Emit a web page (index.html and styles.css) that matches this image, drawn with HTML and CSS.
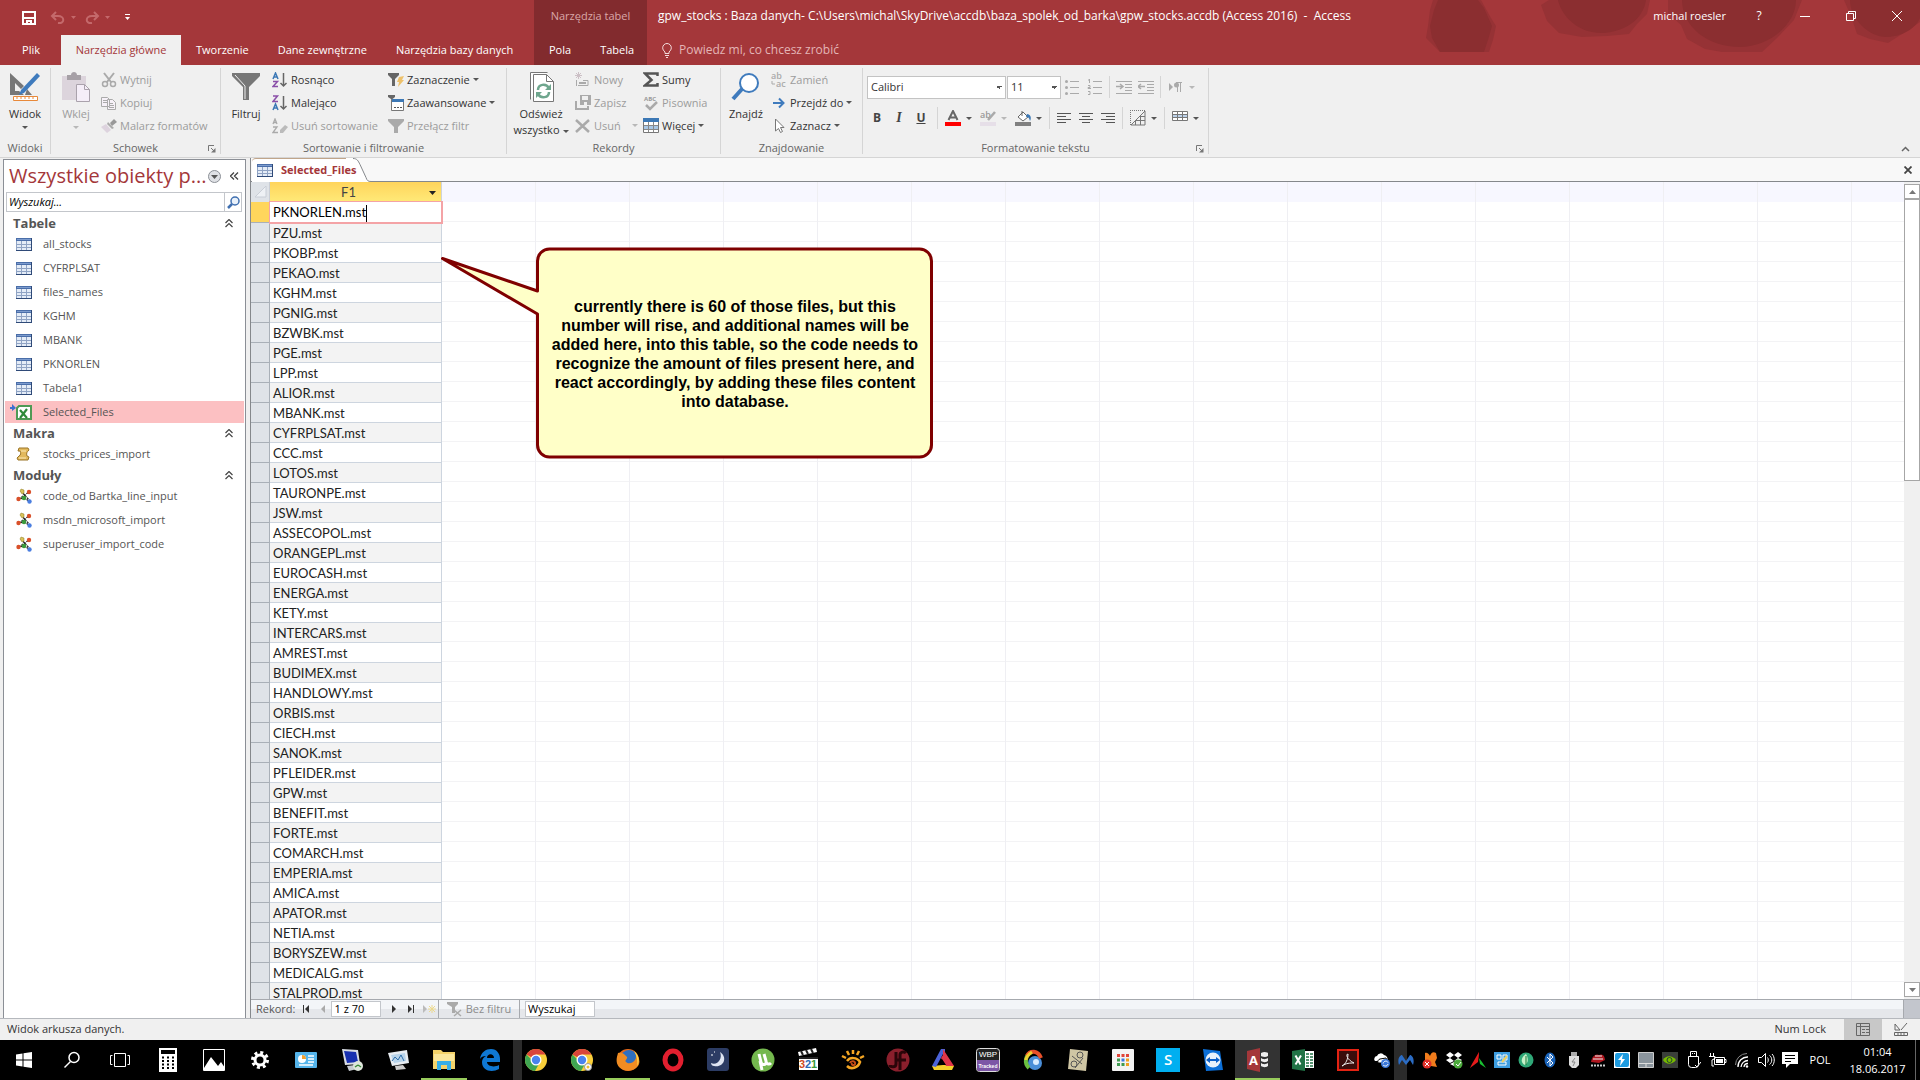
FILE: index.html
```html
<!DOCTYPE html>
<html lang="pl">
<head>
<meta charset="utf-8">
<title>gpw_stocks - Access</title>
<link rel="stylesheet" href="styles.css">
</head>
<body>
<svg class="sprite" aria-hidden="true">
  <symbol id="table" viewBox="0 0 16 13"><path fill="#e4ecf7" d="M0 0h16v13H0z"/><path fill="#4a6ea9" d="M0 0h16v3H0z"/><path fill="#7d9cce" d="M1 1h14v1H1z"/><path d="M.5 3v10M5.500 3v10M10.500 3v10M0 6.500h16M0 9.500h16" stroke="#8fa3c4" fill="none"/><path d="M0 12.500h16M15.500 0v13" stroke="#2f4a78" fill="none"/></symbol>
  <symbol id="module" viewBox="0 0 16 16"><path d="M3 11 13 4M5 3l9 10M2 11l6-1 5 3" stroke="#222" stroke-width="1.300" stroke-dasharray="2 1" fill="none"/><path fill="#d8c25a" stroke="#8f7c22" stroke-width=".5" d="m5 1 3 1v3L6 6 4 3z"/><circle cx="13" cy="4" r="2.200" fill="#d9502a"/><circle cx="2.500" cy="11" r="2.200" fill="#d9502a"/><circle cx="8" cy="10" r="2.300" fill="#3c9a3c"/><circle cx="13.500" cy="13.500" r="2.200" fill="#4a7ee0"/></symbol>
  <symbol id="fold" viewBox="0 0 8 9"><path d="m.5 4 3.500-3.500L7.500 4m-7 4L4 4.500 7.500 8" stroke="#444" stroke-width="1.200" fill="none"/></symbol>
  <symbol id="launch" viewBox="0 0 8 8"><path d="M.5 6V.5H6M3 3l4 4" stroke="#777" fill="none"/><path d="M7.500 3v4.500H3z" fill="#777"/></symbol>
  <symbol id="chrome" viewBox="0 0 24 24"><circle cx="12" cy="12" r="11" fill="#f9cf3a"/><path fill="#d9453a" d="M12 12 2.500 6.500A11 11 0 0 1 21.500 6.500H12z"/><path fill="#3fa652" d="M2.500 6.500A11 11 0 0 0 11 23l5-9-7-1z"/><circle cx="12" cy="12" r="5.500" fill="#fff"/><circle cx="12" cy="12" r="4.200" fill="#4a83ee"/></symbol>
</svg>

<header class="titlebar">
  <svg class="blots" viewBox="0 0 500 52" width="500" height="52" aria-hidden="true">
    <g fill="#963235"><path d="M13 0h48l10 18 5 8-3 14-4 12H20L6 38l2-12 2-16zM129 0h101l-3 14-10 10-8 10-22 2-25 1-23-4-12-12-6-16zM248 0h134l-8 20-17 18-15 14h-40l-17-3-18-10-6-14-13-12zM424 0h76v22l-18 12-14 9-18-4-13-5-5-15z"/></g>
    <g fill="#8b2e30"><path d="M18 0h40l6 8 8 18-4 14-4 12H20l-8-14-2-12 4-16zM138 0h88c-1 9-9 30-42 33-30 1-44-22-46-33zM262 0h114c0 24-26 47-56 47-32 0-58-20-58-47zM430 0h70v18c-4 10-18 19-34 19s-36-17-36-37z"/></g>
  </svg>
  <div class="tb-left">
    <div class="quick">
      <button aria-label="Zapisz"><svg width="14" height="14" viewBox="0 0 14 14"><path fill="none" stroke="#fff" stroke-width="2" d="M1 1h12v12H1z"/><path fill="#fff" d="M1 6h12v2H1zM4 9h6v4H8v-2H6v2H4z"/></svg></button>
      <button class="q-undo" aria-label="Cofnij"><svg width="27" height="14" viewBox="0 0 27 14"><path fill="none" stroke="#c4696b" stroke-width="2" d="M6 1 2 5l4 4M2 5h6c7 0 7 8 0 7"/><path fill="#c4696b" d="M21 5h5l-2.500 3z"/></svg></button>
      <button class="q-redo" aria-label="Wykonaj ponownie"><svg width="27" height="14" viewBox="0 0 27 14"><path fill="none" stroke="#c4696b" stroke-width="2" d="m9 1 4 4-4 4m4-4H7c-7 0-7 8 0 7"/><path fill="#c4696b" d="M20 5h5l-2.500 3z"/></svg></button>
      <button aria-label="Dostosuj pasek"><svg width="7" height="7" viewBox="0 0 7 7"><path fill="#fff" d="M1 0h5v1H1zM1 3h5L3.500 6z"/></svg></button>
    </div>
    <nav class="tabs">
      <button class="tab file">Plik</button><button class="tab on">Narzędzia główne</button><button class="tab">Tworzenie</button><button class="tab">Dane zewnętrzne</button><button class="tab">Narzędzia bazy danych</button>
    </nav>
  </div>
  <div class="tb-context">
    <div class="ctx-name">Narzędzia tabel</div>
    <nav class="tabs"><button class="tab">Pola</button><button class="tab">Tabela</button></nav>
  </div>
  <div class="tb-right">
    <div class="caption">
      <span>gpw_stocks : Baza danych- C:\Users\michal\SkyDrive\accdb\baza_spolek_od_barka\gpw_stocks.accdb (Access 2016) &nbsp;- &nbsp;Access</span>
      <span class="user">michal roesler</span>
      <button class="win" aria-label="Pomoc">?</button>
      <button class="win" aria-label="Minimalizuj"><svg width="10" height="10"><path d="M0 5.500h10" stroke="#fff"/></svg></button>
      <button class="win" aria-label="Przywróć"><svg width="10" height="10"><path d="M.5 2.500h7v7h-7zM2.500 2V.5h7v7H8" stroke="#fff" fill="none"/></svg></button>
      <button class="win" aria-label="Zamknij"><svg width="10" height="10"><path d="m0 0 10 10M10 0 0 10" stroke="#fff"/></svg></button>
    </div>
    <button class="tell"><svg width="10" height="15" viewBox="0 0 10 15"><path d="M3 10.500V9C1.500 7.500.7 6.500.7 4.800a4.300 4.300 0 0 1 8.600 0C9.300 6.500 8.500 7.500 7 9v1.500zM3 12.500h4M4 14.500h2" stroke="#f3dcdc" fill="none"/></svg>Powiedz mi, co chcesz zrobić</button>
  </div>
</header>

<section class="ribbon">
  <div class="group g-views">
    <div class="body">
      <button class="big"><svg width="32" height="30" viewBox="0 0 32 30"><path fill="#777" d="M1 1v22h14l-5-4H6v-8l6 6 3-3zM18 17l5 6h-7z"/><path fill="#3f7bbd" d="m28 1 3 3-16 17-5 2 2-5z"/><path d="M4.500 24.500h24v4h-24zM8 25v2M12 25v2M16 25v2M20 25v2M24 25v2" stroke="#e8893a" fill="#fff"/></svg><span>Widok</span><i class="dd"></i></button>
    </div>
    <div class="name">Widoki</div>
  </div>
  <div class="group g-clip">
    <div class="body">
      <button class="big off"><svg width="32" height="30" viewBox="0 0 32 30"><path fill="#dcd4dc" d="M2 4h24v24H2z"/><path fill="#a6a0a6" d="M7 3h4c0-4 6-4 6 0h4v5H7z"/><path fill="#f5eef8" stroke="#aaa2ac" d="M16.500 12.500h8l5 5v12h-13z"/><path fill="none" stroke="#aaa2ac" d="M24.500 12.500v5h5"/></svg><span>Wklej</span><i class="dd"></i></button>
      <div class="col">
        <button class="sm off"><svg width="16" height="16"><path d="m3 1 7 9M13 1 6 10" stroke="#aaa" stroke-width="2"/><circle cx="4" cy="12" r="2.500" fill="none" stroke="#aaa" stroke-width="1.500"/><circle cx="12" cy="12" r="2.500" fill="none" stroke="#aaa" stroke-width="1.500"/></svg>Wytnij</button>
        <button class="sm off"><svg width="16" height="16"><path d="M.5 2.500h6l2 2v7h-8zM2 5.500h4M2 7.500h4M6.500 4.500h5l3 3v7h-8zM8 8.500h4M8 10.500h5M8 12.500h5" stroke="#aaa" fill="#f6f1f8"/></svg>Kopiuj</button>
        <button class="sm off"><svg width="16" height="16"><path d="m9 5 4-4 3 3-5 4z" fill="#999"/><path d="m7 4 6 6-2 1-5-5z" fill="#aaa"/><path d="m5 6 5 6-4 3-6-6z" fill="#ddd3de"/></svg>Malarz formatów</button>
      </div>
    </div>
    <div class="name">Schowek<svg class="launch" width="8" height="8"><use href="#launch"/></svg></div>
  </div>
  <div class="group g-sort">
    <div class="body">
      <button class="big"><svg width="32" height="30" viewBox="0 0 32 30"><path fill="#777" d="M2 1h28v3L19 15v13h-6V15L2 4z"/><path d="m5 3 10 11v13" stroke="#f0f0f0" fill="none"/></svg><span>Filtruj</span></button>
      <div class="col">
        <button class="sm"><svg width="16" height="16"><g fill="none" stroke-width="1.500"><path d="m1 7 2.500-6L6 7M2 5h3" stroke="#3c78b5"/><path d="M1 9.500h4.500L1 14.500h5" stroke="#8a4fa8"/><path d="M11.500 1v13M8.500 11l3 3 3-3" stroke="#666"/></g></svg>Rosnąco</button>
        <button class="sm"><svg width="16" height="16"><g fill="none" stroke-width="1.500"><path d="M1 1h4.500L1 6.500h5" stroke="#8a4fa8"/><path d="m1 15 2.500-6L6 15M2 13h3" stroke="#3c78b5"/><path d="M11.500 1v13M8.500 11l3 3 3-3" stroke="#666"/></g></svg>Malejąco</button>
        <button class="sm off"><svg width="16" height="16"><g fill="none" stroke="#aaa" stroke-width="1.300"><path d="m1 6 2-5 2 5M2 4.500h3M1 9h4l-4 5.500h5"/></g><path d="m8 12 5-5 3 2-5 6H8z" fill="#bbb"/></svg>Usuń sortowanie</button>
      </div>
      <div class="col">
        <button class="sm"><svg width="16" height="16"><path d="M0 1h11v2L7 7v7H4V7L0 3z" fill="#666"/><path d="m11 5 5-1-2 4h2l-6 7 1-5H9z" fill="#eec16a"/></svg>Zaznaczenie<i class="dd"></i></button>
        <button class="sm"><svg width="16" height="16"><path d="M0 0h7v2L4.500 4v4H3V4L0 2z" fill="#666"/><path d="M3.500 4.500h12v11h-12z" fill="#fff" stroke="#777"/><path d="M4 4h12v3H4z" fill="#3c78b5"/><path d="M6 12.500h8" stroke="#555" stroke-dasharray="2 1"/></svg>Zaawansowane<i class="dd"></i></button>
        <button class="sm off"><svg width="16" height="16"><path d="M0 1h16v2l-6 6v6H6V9L0 3z" fill="#aaa"/></svg>Przełącz filtr</button>
      </div>
    </div>
    <div class="name">Sortowanie i filtrowanie</div>
  </div>
  <div class="group g-rec">
    <div class="body">
      <button class="big"><svg width="32" height="30" viewBox="0 0 32 30"><path fill="#fff" stroke="#777" d="M5.500 27.500v-27h17M8.500 2.500h13l7 7v20h-20z"/><path fill="none" stroke="#777" d="M21.500 2.500v7h7"/><path d="M13 18c0-6 8-7 11-2M24 20c0 6-8 7-11 2" stroke="#6fa68e" stroke-width="2.500" fill="none"/><path fill="#6fa68e" d="M26 12v6h-6zM11 26v-6h6z"/></svg><span>Odśwież</span><span>wszystko<i class="dd"></i></span></button>
      <div class="col">
        <button class="sm off"><svg width="16" height="16"><path d="M3.500 0v7M0 3.500h7M1 1l5 5M6 1 1 6" stroke="#ccc0c6" /><path d="M3 13.500h10v-5H8" stroke="#aaa" fill="none"/><path d="M4 10h7v2H4zM1 8h1v6H1z" fill="#aaa"/></svg>Nowy</button>
        <button class="sm off"><svg width="16" height="16"><path d="M5 0h11v10H5z" fill="#aaa"/><path d="M7 1h6v4H7zM9 7h3v3H9z" fill="#f0f0f0"/><path d="M1 6v8h12v-3" stroke="#aaa" stroke-width="2" fill="none"/></svg>Zapisz</button>
        <button class="sm off"><svg width="16" height="16"><path d="m1 2 13 12M14 2 1 14" stroke="#aaa" stroke-width="2.500"/></svg>Usuń<i class="dd far"></i></button>
      </div>
      <div class="col">
        <button class="sm"><svg width="16" height="16"><path d="M14.500 4V1.500H2L8.500 8 2 13.500h12.500V11" stroke="#555" stroke-width="2.500" fill="none"/></svg>Sumy</button>
        <button class="sm off"><svg width="16" height="16"><text x="1" y="6" font-size="6" fill="#999" font-family="Open Sans" font-weight="700">ABC</text><path d="m3 10 4 4 7-7" stroke="#aaa" stroke-width="2.500" fill="none"/></svg>Pisownia</button>
        <button class="sm"><svg width="16" height="16"><path d="M.5.500h15v14H.5z" fill="#fff" stroke="#777"/><path d="M0 0h16v4H0z" fill="#3c78b5"/><path d="M1 7h14v4H1z" fill="#a9c8e6"/><path d="M5.500 4v10M10.500 4v10M1 7.500h14M1 11.500h14" stroke="#888"/></svg>Więcej<i class="dd"></i></button>
      </div>
    </div>
    <div class="name">Rekordy</div>
  </div>
  <div class="group g-find">
    <div class="body">
      <button class="big"><svg width="32" height="30" viewBox="0 0 32 30"><circle cx="19" cy="11" r="9" fill="#fff" stroke="#3f7bbd" stroke-width="2"/><path d="m12 17-9 10" stroke="#3f7bbd" stroke-width="4"/></svg><span>Znajdź</span></button>
      <div class="col">
        <button class="sm off"><svg width="16" height="16"><g fill="#aaa" font-family="Open Sans" font-size="9" font-weight="600"><text x="0" y="7">ab</text><text x="5" y="15">ac</text></g><path d="M1 9v3h3" stroke="#aaa" fill="none"/></svg>Zamień</button>
        <button class="sm"><svg width="16" height="16"><path d="M2 8h9M8 3.500 12.500 8 8 12.500" stroke="#3f7bbd" stroke-width="2" fill="none"/></svg>Przejdź do<i class="dd"></i></button>
        <button class="sm"><svg width="16" height="16"><path d="M4.500 1v12l3-2.500 2 4 2-1-2-4h3.500z" fill="#fff" stroke="#777"/></svg>Zaznacz<i class="dd"></i></button>
      </div>
    </div>
    <div class="name">Znajdowanie</div>
  </div>
  <div class="group g-text">
    <div class="body fmt">
      <div class="line">
        <select class="pick font" aria-label="Czcionka"><option>Calibri</option></select>
        <select class="pick size" aria-label="Rozmiar"><option>11</option></select>
        <button class="ic" aria-label="Punktory"><svg width="16" height="16"><path d="M5 2.500h9M5 8.500h9M5 14.500h9" stroke="#aaa"/><g fill="#aaa"><circle cx="1.500" cy="2.500" r="1.500"/><circle cx="1.500" cy="8.500" r="1.500"/><circle cx="1.500" cy="14.500" r="1.500"/></g></svg></button>
        <button class="ic" aria-label="Numerowanie"><svg width="16" height="16"><path d="M6 2.500h9M6 8.500h9M6 14.500h9M2.500 0v4M1 1h1M1 6.500h2v2H1v1h3M1 12.500h2v3H1" stroke="#aaa" fill="none"/></svg></button>
        <i class="bar"></i>
        <button class="ic" aria-label="Zwiększ wcięcie"><svg width="16" height="16"><path d="M0 2.500h16M9 5.500h7M9 8.500h7M9 11.500h7M0 14.500h16" stroke="#aaa"/><path d="M0 7.500h6M4 5l3 2.500L4 10" stroke="#aaa" stroke-width="1.500" fill="none"/></svg></button>
        <button class="ic" aria-label="Zmniejsz wcięcie"><svg width="16" height="16"><path d="M0 2.500h16M9 5.500h7M9 8.500h7M9 11.500h7M0 14.500h16" stroke="#aaa"/><path d="M7 7.500H1M3 5 0 7.500 3 10" stroke="#aaa" stroke-width="1.500" fill="none"/></svg></button>
        <i class="bar"></i>
        <button class="ic drop off" aria-label="Kierunek tekstu"><svg width="16" height="16"><path d="m1 4 4 4-4 4z" fill="#aaa"/><path d="M9.500 4v9M12.500 4v9M8 3.500h6" stroke="#aaa"/><circle cx="8.500" cy="6" r="2.500" fill="#aaa"/></svg><i class="dd"></i></button>
      </div>
      <div class="line">
        <button class="ic ltr b">B</button><button class="ic ltr i">I</button><button class="ic ltr u">U</button>
        <i class="bar"></i>
        <button class="ic drop" aria-label="Kolor czcionki"><svg width="16" height="16"><path d="M3.500 10 8 1l4.500 9M5 7.500h6" stroke="#666" stroke-width="2" fill="none"/><path d="M0 12h16v4H0z" fill="#f00"/></svg><i class="dd"></i></button>
        <button class="ic drop off" aria-label="Wyróżnienie"><svg width="16" height="16"><text x="0" y="8" font-size="9" font-family="Open Sans" fill="#999" font-weight="600">ab</text><path d="M15 2 8 10" stroke="#aaa" stroke-width="2.500"/><path d="M0 12h16v4H0z" fill="#e6dfe8"/></svg><i class="dd"></i></button>
        <button class="ic drop" aria-label="Kolor tła"><svg width="16" height="16"><path d="m3 7 5-5 5 5-5 4z" fill="#fff" stroke="#666"/><path d="M7 6V1" stroke="#666"/><path d="M12 4c5 1 4 5 3 7-1-3-1-4-4-4z" fill="#3c78b5"/><path d="M0 12h16v4H0z" fill="#808080"/></svg><i class="dd"></i></button>
        <i class="bar"></i>
        <button class="ic" aria-label="Do lewej"><svg width="16" height="16"><path d="M1 3.500h14M1 6.500h9M1 9.500h14M1 12.500h9" stroke="#555"/></svg></button>
        <button class="ic" aria-label="Do środka"><svg width="16" height="16"><path d="M1 3.500h14M4 6.500h8M1 9.500h14M4 12.500h8" stroke="#555"/></svg></button>
        <button class="ic" aria-label="Do prawej"><svg width="16" height="16"><path d="M1 3.500h14M6 6.500h9M1 9.500h14M6 12.500h9" stroke="#555"/></svg></button>
        <i class="bar"></i>
        <button class="ic drop" aria-label="Linie siatki"><svg width="16" height="16"><path d="M0 .5h16M.5 0v16" stroke="#777" stroke-dasharray="1 1"/><path d="M1 15 15 1v14zM5.500 11v4M10.500 6v9M5 10.500h10M10 6.500h5" stroke="#777" fill="none"/></svg><i class="dd"></i></button>
        <i class="bar"></i>
        <button class="ic drop" aria-label="Kolor wiersza"><svg width="16" height="16"><path d="M.5 1.500h15v9H.5z" fill="#fff" stroke="#777"/><path d="M1 4h14v4H1z" fill="#bcd2ea"/><path d="M5.500 1v10M10.500 1v10M0 4.500h16M0 7.500h16" stroke="#777"/></svg><i class="dd"></i></button>
      </div>
    </div>
    <div class="name">Formatowanie tekstu<svg class="launch" width="8" height="8"><use href="#launch"/></svg></div>
  </div>
  <button class="collapse" aria-label="Zwiń wstążkę"><svg width="9" height="6"><path d="m1 5 3.500-3.500L8 5" stroke="#666" stroke-width="1.500" fill="none"/></svg></button>
</section>

<main class="work">
  <aside class="navpane">
    <div class="nav-head">
      <h1>Wszystkie obiekty p...</h1>
      <button aria-label="Menu"><svg width="13" height="13"><circle cx="6.500" cy="6.500" r="6" fill="#dfe1e5" stroke="#8b8f96"/><path d="M3 5h7L6.500 9z" fill="#555"/></svg></button>
      <button aria-label="Zwiń okienko"><svg width="9" height="8"><path d="M4 .5.500 4 4 7.500M8 .5 4.500 4 8 7.500" stroke="#444" fill="none" stroke-width="1.300"/></svg></button>
    </div>
    <div class="nav-search"><input type="text" placeholder="Wyszukaj..." aria-label="Wyszukaj obiekt"><button aria-label="Szukaj"><svg width="13" height="13"><circle cx="8" cy="5" r="4" fill="#e9f1fa" stroke="#3f6fb0" stroke-width="1.500"/><path d="m5 8-4 4" stroke="#3f6fb0" stroke-width="2.500"/></svg></button></div>
    <h2>Tabele<svg width="8" height="9"><use href="#fold"/></svg></h2>
    <ul>
      <li><svg width="16" height="13"><use href="#table"/></svg>all_stocks</li>
      <li><svg width="16" height="13"><use href="#table"/></svg>CYFRPLSAT</li>
      <li><svg width="16" height="13"><use href="#table"/></svg>files_names</li>
      <li><svg width="16" height="13"><use href="#table"/></svg>KGHM</li>
      <li><svg width="16" height="13"><use href="#table"/></svg>MBANK</li>
      <li><svg width="16" height="13"><use href="#table"/></svg>PKNORLEN</li>
      <li><svg width="16" height="13"><use href="#table"/></svg>Tabela1</li>
      <li class="sel"><svg width="22" height="18" viewBox="0 0 22 18"><path d="M0 4h2V1l4 4-4 3V6H0z" fill="#3f6fd0"/><path d="M9 3h12v13H7V5z" fill="#fff" stroke="#4f9a55" stroke-width="2"/><path d="m10 7 7 8M17 6l-7 9" stroke="#2f8a3a" stroke-width="2.200"/></svg>Selected_Files</li>
    </ul>
    <h2>Makra<svg width="8" height="9"><use href="#fold"/></svg></h2>
    <ul>
      <li><svg width="16" height="14" viewBox="0 0 16 14"><path d="M3 1h9l1 2c-2 2-3 3-2 6l2 1-1 3H2l-1-2 2-2c2-1 2-3 1-5H2z" fill="#e2b95c" stroke="#9a7426"/><path d="M5 4h5M3 11h7" stroke="#fbeab8"/></svg>stocks_prices_import</li>
    </ul>
    <h2>Moduły<svg width="8" height="9"><use href="#fold"/></svg></h2>
    <ul>
      <li><svg width="16" height="16"><use href="#module"/></svg>code_od Bartka_line_input</li>
      <li><svg width="16" height="16"><use href="#module"/></svg>msdn_microsoft_import</li>
      <li><svg width="16" height="16"><use href="#module"/></svg>superuser_import_code</li>
    </ul>
  </aside>

  <section class="doc">
    <div class="doc-tabs">
      <div class="doc-tab"><svg width="16" height="13"><use href="#table"/></svg>Selected_Files</div>
      <svg class="slant" width="18" height="24" viewBox="0 0 18 24"><path d="M0 .5c4 0 5 2 7 6l6 13c1 3 2 4 5 4V24H0z" fill="#fff"/><path d="M0 .5c4 0 5 2 7 6l6 13c1 3 2 4 5 4" fill="none" stroke="#85888c"/></svg>
      <button class="doc-close" aria-label="Zamknij kartę"><svg width="8" height="8"><path d="m.5.500 7 7M7.500.500l-7 7" stroke="#444" stroke-width="1.800"/></svg></button>
    </div>
    <div class="sheet-row">
      <div class="sheet">
        <table>
          <thead><tr><th class="corner"><svg width="12" height="12"><path d="M11 0v11H0z" fill="#eef1f5" stroke="#c9ced6"/></svg></th><th class="f1">F1<svg width="7" height="4"><path d="M0 0h7L3.500 4z" fill="#222"/></svg></th></tr></thead>
          <tbody>
            <tr class="cur"><td></td><td>PKNORLEN.mst<i class="caret"></i></td></tr>
            <tr><td></td><td>PZU.mst</td></tr>
            <tr><td></td><td>PKOBP.mst</td></tr>
            <tr><td></td><td>PEKAO.mst</td></tr>
            <tr><td></td><td>KGHM.mst</td></tr>
            <tr><td></td><td>PGNIG.mst</td></tr>
            <tr><td></td><td>BZWBK.mst</td></tr>
            <tr><td></td><td>PGE.mst</td></tr>
            <tr><td></td><td>LPP.mst</td></tr>
            <tr><td></td><td>ALIOR.mst</td></tr>
            <tr><td></td><td>MBANK.mst</td></tr>
            <tr><td></td><td>CYFRPLSAT.mst</td></tr>
            <tr><td></td><td>CCC.mst</td></tr>
            <tr><td></td><td>LOTOS.mst</td></tr>
            <tr><td></td><td>TAURONPE.mst</td></tr>
            <tr><td></td><td>JSW.mst</td></tr>
            <tr><td></td><td>ASSECOPOL.mst</td></tr>
            <tr><td></td><td>ORANGEPL.mst</td></tr>
            <tr><td></td><td>EUROCASH.mst</td></tr>
            <tr><td></td><td>ENERGA.mst</td></tr>
            <tr><td></td><td>KETY.mst</td></tr>
            <tr><td></td><td>INTERCARS.mst</td></tr>
            <tr><td></td><td>AMREST.mst</td></tr>
            <tr><td></td><td>BUDIMEX.mst</td></tr>
            <tr><td></td><td>HANDLOWY.mst</td></tr>
            <tr><td></td><td>ORBIS.mst</td></tr>
            <tr><td></td><td>CIECH.mst</td></tr>
            <tr><td></td><td>SANOK.mst</td></tr>
            <tr><td></td><td>PFLEIDER.mst</td></tr>
            <tr><td></td><td>GPW.mst</td></tr>
            <tr><td></td><td>BENEFIT.mst</td></tr>
            <tr><td></td><td>FORTE.mst</td></tr>
            <tr><td></td><td>COMARCH.mst</td></tr>
            <tr><td></td><td>EMPERIA.mst</td></tr>
            <tr><td></td><td>AMICA.mst</td></tr>
            <tr><td></td><td>APATOR.mst</td></tr>
            <tr><td></td><td>NETIA.mst</td></tr>
            <tr><td></td><td>BORYSZEW.mst</td></tr>
            <tr><td></td><td>MEDICALG.mst</td></tr>
            <tr><td></td><td>STALPROD.mst</td></tr>
          </tbody>
        </table>
        <div class="callout">
          <svg width="492" height="214" viewBox="0 0 492 214"><path d="M1.500 11.500 96.500 44V14a12 12 0 0 1 12-12h370a12 12 0 0 1 12 12v184a12 12 0 0 1-12 12h-370a12 12 0 0 1-12-12V67z" fill="#ffffc8" stroke="#7f0000" stroke-width="3" stroke-linejoin="round"/></svg>
          <p>currently there is 60 of those files, but this<br>number will rise, and additional names will be<br>added here, into this table, so the code needs to<br>recognize the amount of files present here, and<br>react accordingly, by adding these files content<br>into database.</p>
        </div>
      </div>
      <div class="vscroll">
        <button aria-label="W górę"><svg width="7" height="4"><path d="M0 4h7L3.500 0z" fill="#777"/></svg></button>
        <div class="track"><div class="thumb"></div></div>
        <button aria-label="W dół"><svg width="7" height="4"><path d="M0 0h7L3.500 4z" fill="#777"/></svg></button>
      </div>
    </div>
    <div class="recnav">
      <div class="rec-main">
        <label for="rec">Rekord:</label>
        <button aria-label="Pierwszy"><svg width="7" height="8"><path d="M0 0h1v8H0zM6 0v8L2 4z" fill="#333"/></svg></button>
        <button aria-label="Poprzedni"><svg width="5" height="8"><path d="M4 0v8L0 4z" fill="#aaa"/></svg></button>
        <input id="rec" type="text" value="1 z 70">
        <button aria-label="Następny"><svg width="5" height="8"><path d="M0 0v8l4-4z" fill="#333"/></svg></button>
        <button aria-label="Ostatni"><svg width="7" height="8"><path d="M5 0h1v8H5zM0 0v8l4-4z" fill="#333"/></svg></button>
        <button aria-label="Nowy rekord"><svg width="13" height="8"><path d="M0 0v8l4-4z" fill="#bbb"/><path d="M9 0v8M5 4h8M6 1l6 6M12 1 6 7" stroke="#ecd98e"/></svg></button>
      </div>
      <button class="nofilter"><svg width="15" height="15"><path d="M0 0h11v2L8 5v6H5V5L0 2z" fill="#aaa"/><path d="m7 8 7 6M14 8l-7 6" stroke="#aaa" stroke-width="1.500"/></svg>Bez filtru</button>
      <input class="find" type="text" value="Wyszukaj" aria-label="Wyszukaj w rekordach">
      <span class="corner-box"></span>
    </div>
  </section>
</main>

<footer class="status">
  <span>Widok arkusza danych.</span>
  <span class="num">Num Lock</span>
  <button class="on" aria-label="Widok arkusza danych"><svg width="14" height="13"><path d="M.5.500h13v12H.5zM0 3.500h14M4.500 0v13" stroke="#666" fill="none"/><path d="M6 6.500h7M6 9.500h7" stroke="#666" stroke-dasharray="3 1"/></svg></button>
  <button aria-label="Widok projektu"><svg width="14" height="13"><path d="M1 1v6h5zM13 0 7 7M.5 9.500h13v3H.5zM4 10v2M7 10v2M10 10v2" stroke="#666" fill="none"/></svg></button>
</footer>

<nav class="taskbar">
  <div class="sys">
    <button aria-label="Start"><svg width="16" height="16"><path fill="#fff" d="M0 2.500 6.500 1.500V7.500H0zM7.500 1.300 16 0v7.500H7.500zM0 8.500h6.500v6L0 13.500zM7.500 8.500H16V16l-8.500-1.300z"/></svg></button>
    <button aria-label="Szukaj"><svg width="18" height="18"><circle cx="11" cy="6.500" r="5" fill="none" stroke="#fff" stroke-width="1.500"/><path d="m7.500 10.500-6 6" stroke="#fff" stroke-width="1.500"/></svg></button>
    <button aria-label="Widok zadań"><svg width="20" height="14"><path d="M4.500.500h11v13h-11zM2.500 2.500H.500v9h2M17.500 2.500h2v9h-2" stroke="#fff" fill="none"/></svg></button>
    <button aria-label="Kalkulator"><svg width="18" height="24"><path fill="#fff" d="M0 0h18v24H0z"/><path d="M2 2h14v4H2z"/><path d="M3 9.500h13M3 13h13M3 16.500h13M3 20h13" stroke="#000" stroke-width="2" stroke-dasharray="2 3"/></svg></button>
  </div>
  <div class="apps a46">
    <button aria-label="Zdjęcia"><svg width="22" height="22"><path d="M.5.500h21v21H.5z" stroke="#fff"/><path fill="#fff" d="M1 19 8 8l7 9 3-4 4 6v2H1z"/></svg></button>
    <button aria-label="Ustawienia"><svg width="18" height="18"><circle cx="9" cy="9" r="5" fill="none" stroke="#fff" stroke-width="3"/><circle cx="9" cy="9" r="7.500" fill="none" stroke="#fff" stroke-width="3" stroke-dasharray="3 2.890"/></svg></button>
    <button aria-label="Panel sterowania"><svg width="22" height="16"><rect width="22" height="16" rx="1" fill="#55b4ea"/><circle cx="7" cy="7" r="4" fill="#fff"/><path d="M7 7V3a4 4 0 0 1 4 4z" fill="#f0a030"/><path d="M13 4h6M13 7h6M13 10h6M4 13h14" stroke="#fff" stroke-width="1.500"/></svg></button>
    <button aria-label="Pulpit zdalny"><svg width="24" height="24"><path d="m2 1 16 1 2 14-15 1z" fill="#d8dce4"/><path d="m4 3 12 1 2 10-11 1z" fill="#1830b0"/><path d="m7 18 8-1 2 4-8 2z" fill="#c8ccd2"/><circle cx="18" cy="18" r="5" fill="#dfe6dc"/><path d="m15 19 3-2M18 17l3 2" stroke="#388a38" stroke-width="1.500"/></svg></button>
    <button aria-label="Monitor"><svg width="24" height="22"><path d="m2 4 19-3 2 13-17 3z" fill="#e8edf2"/><path d="m5 6 14-2 1 8-12 2z" fill="#b7d3ea"/><path d="m6 12 3-4 3 3 3-5 3 6" stroke="#2c6ca8" fill="none"/><path d="m9 17 8-1 3 4-10 1z" fill="#ccc"/></svg></button>
    <button class="run" aria-label="Eksplorator"><svg width="22" height="20"><path fill="#f3d269" d="M0 0h8l2 2h12v17H0z"/><path fill="#fae79c" d="M1 4h20v7H1z"/><path fill="#35aee8" d="M4 20v-9h14v9h-4v-5H8v5z"/></svg></button>
    <button aria-label="Edge"><svg width="20" height="22"><path fill="#0f78d4" d="M0 10C1 3 6 0 11 0c6 0 9 5 9 10v3H7c0 4 7 6 12 3v4c-7 4-17 2-17-7 0-3 2-5 4-6-3 0-5 1-6 3zm7-1h7c0-5-7-5-7 0z"/></svg></button>
    <button class="split" aria-label="Chrome"><svg width="24" height="24"><use href="#chrome"/></svg></button>
    <button aria-label="Chrome 2"><svg width="24" height="24"><use href="#chrome"/><circle cx="18" cy="19" r="3.500" fill="#fff" stroke="#999"/><circle cx="18" cy="19" r="1.500" fill="#f0c030"/></svg></button>
  </div>
  <div class="apps a45">
    <button class="run" aria-label="Firefox"><svg width="24" height="24"><circle cx="12" cy="12" r="11" fill="#e66a1c"/><circle cx="13" cy="10" r="8" fill="#2f6fc0"/><path d="M2 5c3-1 6 0 9 4 1 2-3 3-1 5 3 3 8 0 9-2 2-3 1-6-1-8 5 3 7 10 4 14-4 6-14 6-19 1C-1 14 1 9 2 5z" fill="#f08c22"/><path d="M18 3c5 4 6 10 3 15 1-5 0-10-3-15z" fill="#fbd54a"/></svg></button>
    <button aria-label="Opera"><svg width="22" height="24"><ellipse cx="11" cy="12" rx="8" ry="9" fill="none" stroke="#e21f2f" stroke-width="5"/></svg></button>
    <button aria-label="Stellarium"><svg width="22" height="24"><rect width="22" height="23" rx="3" fill="#2c3c64"/><path d="M13 4c8 5 4 16-6 14-2 0-3-2-3-3 6 3 12-4 9-11z" fill="#dfe5f2"/><path d="M4 7h2M7 4h1" stroke="#fff"/></svg></button>
    <button aria-label="uTorrent"><svg width="24" height="24"><circle cx="12" cy="12" r="11.500" fill="#74b84e"/><path d="m8 6 2 8c1 4 6 3 5-1l-2-7M15 13c0 3 3 4 5 2M9 13l2 9" stroke="#fff" stroke-width="3" fill="none"/></svg></button>
    <button aria-label="Klaps"><svg width="22" height="24"><path fill="#fff" d="M2 10h19v12H2zM1 4l18-4 1 4-18 4z"/><path d="m4 3 2 4M9 2l2 4M14 1l2 4M2 10h19" stroke="#222" stroke-width="2"/><g font-family="Liberation Sans" font-weight="700" font-size="11"><text x="2" y="20" fill="#d04a1e">3</text><text x="8" y="20" fill="#2a6ab8">2</text><text x="14" y="20" fill="#3a9a3a">1</text></g></svg></button>
    <button aria-label="XnView"><svg width="24" height="22"><path d="M6 12c3-4 10-4 13 1-2 6-9 8-13 4" fill="none" stroke="#f5a623" stroke-width="2.500"/><path d="M9 14c1-3 6-2 5 1-1 2-4 1-3-1" fill="none" stroke="#c24a14" stroke-width="2"/><path d="m1 7 4 2M6 2l2 4M12 1v4M18 2l-2 4M23 7l-4 2" stroke="#f5a623" stroke-width="2.500"/></svg></button>
    <button aria-label="JF"><svg width="24" height="24"><circle cx="12" cy="12" r="11.500" fill="#8a1f2c"/><path d="M10 4v12c0 4-6 3-6 1M14 22V7c0-3 4-4 6-2M11 12h9" stroke="#2a0509" stroke-width="3" fill="none"/></svg></button>
    <button aria-label="Trójkąt"><svg width="24" height="24"><path d="m1 18 11-1h9l2 1-2 4H3z" fill="#f5d02a"/><path d="M10 1 1 18l4 1 7-13 2 4V1z" fill="#4b63d8"/><path d="m12 1 11 17h-8l-5-8 2-3z" fill="#e0364a"/><path d="m11 11 4 6H8z" fill="#000"/></svg></button>
    <button aria-label="WBP"><svg width="24" height="24"><rect x=".5" y=".5" width="23" height="23" rx="3" fill="#222" stroke="#ddd"/><path d="M1 12h22v9a2 2 0 0 1-2 2H3a2 2 0 0 1-2-2z" fill="#7c56a6"/><g fill="#fff" text-anchor="middle" font-family="Liberation Sans"><text x="12" y="9" font-size="8">WBP</text><text x="12" y="20" font-size="5" font-weight="700">Tracked</text></g></svg></button>
    <button aria-label="IDM"><svg width="20" height="24"><circle cx="12" cy="15" r="7" fill="#4a8ed8"/><path d="M6 20C1 15 2 7 9 4" stroke="#6cc040" stroke-width="4" fill="none"/><path d="M4 8C7 2 15 2 18 10" stroke="#e8502a" stroke-width="4" fill="none"/><path d="M3 12c0-4 3-6 6-8" stroke="#f0d030" stroke-width="3" fill="none"/><circle cx="13" cy="14" r="3" fill="#d9ecff"/></svg></button>
    <button aria-label="Notatnik"><svg width="22" height="24"><path d="m3 1 18 2-2 20-18-2z" fill="#cfc6a4"/><circle cx="13" cy="7" r="3" fill="none" stroke="#555"/><circle cx="7" cy="16" r="3" fill="none" stroke="#555"/><path d="m5 8 10 8M16 10 8 20" stroke="#555"/></svg></button>
    <button aria-label="Siatka"><svg width="22" height="22"><rect width="22" height="22" rx="1" fill="#f3f3f3"/><path fill="#e0453a" d="M5 5h3v3H5zM9.500 5h3v3h-3zM14 5h3v3h-3z"/><path fill="#3f9a50" d="M5 9.500h3v3H5zM5 14h3v3H5zM9.500 14h3v3h-3z"/><path fill="#3b78e0" d="M9.500 9.500h3v3h-3z"/><path fill="#f0a020" d="M14 9.500h3v3h-3zM14 14h3v3h-3z"/></svg></button>
    <button aria-label="Skype"><svg width="24" height="24"><path fill="#00aff0" d="M0 0h24v24H0z"/><text x="12" y="17" text-anchor="middle" font-family="Open Sans" font-weight="600" font-size="15" fill="#fff">S</text></svg></button>
    <button aria-label="TeamViewer"><svg width="22" height="24"><path d="m1 1 17 2 3 19-17 1z" fill="#0b6fd8"/><circle cx="11" cy="12" r="7.500" fill="#e8f1fb"/><path d="m4 12 4-3v2h6V9l4 3-4 3v-2H8v2z" fill="#0b5fc8"/></svg></button>
    <button class="run active" aria-label="Access"><svg width="24" height="24"><path fill="#a4373a" d="m1 3 13-3v24L1 21z"/><text x="7.500" y="17" text-anchor="middle" font-family="Open Sans" font-weight="700" font-size="13" fill="#fff">A</text><path d="M15 5c4-2 7 0 7 0v3c-3 2-7 0-7 0zM15 10c3 2 5 1 7 0v3c-3 2-5 1-7 0zM15 15c3 2 5 1 7 0v3c-3 2-5 1-7 0z" fill="#eee"/></svg></button>
    <button aria-label="Excel"><svg width="24" height="22"><path fill="#fff" d="M13 2h10v17H13z"/><path d="M15 5h3m1 0h3M15 8h3m1 0h3M15 11h3m1 0h3M15 14h3m1 0h3M15 17h3m1 0h3" stroke="#217346" stroke-width="1.500"/><path fill="#217346" d="m1 2 13-2v22L1 20z"/><path d="m4.500 6.500 5 9M10 6.500l-5.500 9" stroke="#fff" stroke-width="2"/></svg></button>
    <button aria-label="Acrobat"><svg width="22" height="22"><path d="M1 1h20v20H1z" fill="#3a0d0b" stroke="#e42313" stroke-width="2"/><path d="M5 17c4-2 6-7 6-12-2 0-2 5 6 9-4 0-8 0-12 3z" fill="none" stroke="#eee"/></svg></button>
  </div>
  <div class="tray">
    <span><svg width="18" height="18"><path d="M2 10a3 3 0 0 1 2-5 4 4 0 0 1 7-1 4 4 0 0 1 3 6z" fill="#fff"/><path d="M5 12a3 3 0 0 1 2-4l6-1 2 5z" fill="#fff" stroke="#000"/><circle cx="12.500" cy="12.500" r="4.500" fill="#3c78d8"/><path d="M10 12.500c1-3 4-3 5-1M15 13c-1 3-4 2-5 1" stroke="#fff" fill="none"/></svg></span>
    <span class="stripe"><svg width="16" height="14"><path d="M1 12C-1 6 2 2 4 2l4 6 4-6c2 0 5 4 3 10l-3-5-4 5-4-5z" fill="#2b6cc4"/></svg></span>
    <span><svg width="16" height="18"><path d="M3 2c2-1 4 1 5 3 1-3 3-5 6-3l1 5-2 4 2 5-6-1-6 1V9z" fill="#f07c1c"/><circle cx="5" cy="13" r="4.500" fill="#e0302a"/><path d="m3 11 4 4M7 11l-4 4" stroke="#fff"/></svg></span>
    <span><svg width="18" height="18"><path fill="#fff" d="m1 4 4-3 4 3-4 3zM9 4l4-3 4 3-4 3zM1 9l4-2 4 3-4 2zM9 10l4-3 4 2-4 3zM5 13l4-2 4 2-4 2z"/><circle cx="13" cy="13" r="4.500" fill="#4cab3c"/><path d="m11 13 2 2 3-4" stroke="#fff" fill="none"/></svg></span>
    <span><svg width="16" height="16"><path d="m9 0-1 8-8 8 2-4z" fill="#e81c1c"/><path d="m9 0-3 8-6 8 8-6z" fill="#e81c1c"/><path d="m9 6 1 6 6 4-4-6z" fill="#18c030"/></svg></span>
    <span><svg width="16" height="16"><path fill="#3d9de0" d="M0 0h16v16H0z"/><path d="M3 3h4v4H3zM9 3h4v5H9zM4 10h8v3H4z" fill="none" stroke="#fff"/><path d="m8 10 5-6" stroke="#f0d060" stroke-width="2"/></svg></span>
    <span><svg width="16" height="16"><circle cx="8" cy="8" r="7.500" fill="#30a878"/><path d="M7 13C2 11 3 5 8 2c3 5 2 9-1 11z" fill="#c8f0c8"/><path d="M8 4v9" stroke="#187838"/></svg></span>
    <span><svg width="12" height="16"><ellipse cx="6" cy="8" rx="5.500" ry="7.500" fill="#1a63b8"/><path d="m3 5 6 6-3 3V2l3 3-6 6" stroke="#fff" fill="none"/></svg></span>
    <span><svg width="12" height="16"><path d="M3 0h6v4H3z" fill="#aaa"/><path d="M1 4h10v9l-3 3H4l-3-3z" fill="#ddd"/><path d="M7 6 4 10h3l-2 4" stroke="#888" fill="none"/></svg></span>
    <span><svg width="16" height="14"><path d="M1 9c1-6 5-9 8-7 4-2 6 2 6 5l-6 3z" fill="#b01820"/><path d="M3 6h10M5 3h7" stroke="#eee"/><path d="M1 12.500h14" stroke="#ccc" stroke-width="2" stroke-dasharray="2 1"/></svg></span>
    <span><svg width="16" height="16"><path fill="#fff" d="M0 0h16v16H0z"/><rect x="1" y="1" width="14" height="14" rx="2" fill="#1d9be0"/><path d="m9 2-5 6h3l-1 6 5-7H8z" fill="#fff"/></svg></span>
    <span><svg width="16" height="16"><path d="M.5.500h15v15H.5z" fill="#8a949c" stroke="#ccc"/><path d="M1 11.500h14M8 12v3" stroke="#ddd"/></svg></span>
    <span><svg width="16" height="16"><path fill="#3a3f3a" d="M0 0h16v16H0z"/><path d="M1 8c3-5 9-5 13 0-4 5-10 5-13 0z" fill="#76b900"/><circle cx="7.500" cy="8" r="2.500" fill="none" stroke="#243"/></svg></span>
    <span><svg width="14" height="18"><path d="M3.500 5.500v-5h6v5M1.500 5.500h10v8a3 3 0 0 1-3 3h-4a3 3 0 0 1-3-3zM5 2.500h1M7 2.500h1" stroke="#fff" fill="none"/><path d="m8 14 2 2 4-5" stroke="#fff" fill="none"/></svg></span>
    <span><svg width="18" height="14"><path d="M5.500 4.500h10v7h-10zM16 6.500h1v3h-1" stroke="#fff" fill="none"/><path fill="#fff" d="M7 6h7v4H7z"/><path d="M1.500 0v3M4.500 0v3M0 3.500h6v2L3 7v6h2" stroke="#fff" fill="none"/></svg></span>
    <span><svg width="16" height="16"><path d="M1.500 13A11.500 11.500 0 0 1 13 1.500" stroke="#888" fill="none"/><path d="M4 15A9.500 9.500 0 0 1 14 5M7 15a7 7 0 0 1 7-6.500M10 15a4 4 0 0 1 4-3.500" stroke="#fff" stroke-width="1.300" fill="none"/><circle cx="13" cy="14.500" r="1.200" fill="#fff"/></svg></span>
    <span><svg width="17" height="14"><path d="M.5 4.500h3l4-4v13l-4-4h-3zM9.500 4.500c1 1 1 4 0 5M11.500 2.500c3 2 3 7 0 9M14 1c3 3 3 9 0 12" stroke="#fff" fill="none"/></svg></span>
    <span><svg width="16" height="16"><path fill="#fff" d="M0 0h16v12H8l-4 4v-4H0z"/><path d="M3 3.500h10M3 6.500h10M3 9.500h6" stroke="#000"/></svg></span>
    <span class="lang">POL</span>
    <time class="clock">01:04<br>18.06.2017</time>
    <button class="peek" aria-label="Pokaż pulpit"></button>
  </div>
</nav>
</body>
</html>
```

FILE: styles.css
```css
* { box-sizing: border-box; }
html, body { margin: 0; height: 100%; }
body {
  display: flex;
  flex-direction: column;
  min-height: 100vh;
  overflow: hidden;
  background: #f0f0f0;
  color: #333;
  font: 11px/16px "Open Sans", "Noto Sans", sans-serif;
}
button, input, select { font: inherit; color: inherit; margin: 0; padding: 0; border: 0; background: none; border-radius: 0; }
button { display: inline-flex; align-items: center; justify-content: center; white-space: nowrap; }
svg { flex: none; display: block; }
ul, h1, h2, p { margin: 0; padding: 0; list-style: none; font-weight: normal; }
.sprite { position: absolute; width: 0; height: 0; }

.dd { flex: none; display: inline-block; border: 3px solid transparent; border-top-color: #555; border-bottom: 0; width: 6px; vertical-align: middle; }
.off { color: #9c9c9c; }
.off .dd { border-top-color: #b8b8b8; }

/* title bar */
.titlebar { position: relative; flex: none; display: flex; height: 65px; background: #a4373a; color: #fff; }
.blots { position: absolute; right: 0; top: 0; }
.tb-left { flex: none; width: 534px; }
.quick { display: flex; align-items: center; height: 35px; padding-left: 22px; }
.q-undo { margin-left: 14px; }
.q-redo { margin: 0 12px 0 8px; }
.tabs { display: flex; height: 30px; }
.tab { flex: none; padding: 0 14px 0 15px; }
.tab.file { width: 61px; }
.tab.on { width: 120px; background: #f0f0f0; color: #a4373a; padding: 0; }
.tb-context { flex: none; width: 113px; background: #822b2e; }
.ctx-name { height: 35px; line-height: 32px; text-align: center; color: #d9a7a8; }
.tb-context .tabs { justify-content: space-between; }
.tb-right { position: relative; flex: 1; min-width: 0; display: flex; flex-direction: column; align-items: flex-start; }
.caption { display: flex; align-items: center; width: 100%; height: 35px; padding: 0 0 3px 11px; white-space: nowrap; font-size: 12px; }
.user { margin-left: auto; margin-right: 10px; font-size: 11px; }
.win { width: 46px; height: 32px; }
.tell { height: 30px; gap: 7px; padding-left: 15px; color: #e3b5b6; font-size: 12px; }

/* ribbon */
.ribbon { flex: none; display: flex; height: 93px; background: #f0f0f0; border-bottom: 1px solid #d5d5d5; }
.group { flex: none; display: flex; flex-direction: column; margin: 3px 0; border-right: 1px solid #d5d5d5; }
.body { display: flex; flex: 1; min-height: 0; }
.name { position: relative; height: 14px; line-height: 16px; text-align: center; color: #666; }
.launch { position: absolute; right: 4px; bottom: 1px; }
.g-views { width: 51px; }
.g-clip { width: 170px; }
.g-sort { width: 286px; }
.g-rec { width: 214px; }
.g-find { width: 142px; }
.g-text { width: 346px; }
.big { flex: none; flex-direction: column; justify-content: flex-start; width: 50px; padding-top: 4px; }
.big svg { margin-bottom: 4px; }
.big > .dd { margin-top: 4px; }
.big span .dd { margin-left: 3px; }
.g-sort .big { margin-right: 1px; }
.g-rec .big { width: 68px; }
.col { display: flex; flex-direction: column; align-items: flex-start; }
.sm { height: 23px; gap: 3px; }
.sm .dd.far { margin-left: 8px; }
.g-sort .col + .col { width: 112px; margin-left: auto; margin-right: 6px; }
.g-rec .col { width: 68px; }

.fmt { flex-direction: column; padding-left: 4px; }
.line { display: flex; align-items: center; gap: 6px; }
.line:first-child { height: 38px; }
.line + .line { height: 24px; }
.pick {
  appearance: none;
  height: 23px;
  padding-left: 3px;
  border: 1px solid #c3c3c3;
  background-color: #fff;
  background-image: linear-gradient(to top right, transparent 50%, #555 50%), linear-gradient(to top left, transparent 50%, #555 50%);
  background-size: 3px 3px;
  background-position: right 6px center, right 3px center;
  background-repeat: no-repeat;
}
.font { width: 139px; }
.size { width: 54px; margin: 0 -2px 0 -5px; }
.ic { flex: none; width: 16px; height: 22px; gap: 5px; }
.drop { width: 29px; }
.bar { flex: none; width: 1px; height: 22px; background: #d5d5d5; }
.ltr { font-weight: 700; font-size: 12px; color: #444; }
.ltr.b { margin-left: 2px; }
.ltr.i { font-family: "Liberation Serif", serif; font-style: italic; font-size: 14px; }
.ltr.u { text-decoration: underline; margin-right: 2px; }
.collapse { margin: auto 10px 5px auto; }

/* work area */
.work { flex: 1; display: flex; min-height: 0; background: #f0f0f0; border-bottom: 1px solid #b5b8bd; }
.navpane { flex: none; width: 243px; margin: 1px 4px 0 3px; background: #fff; border: 1px solid #8b8f96; border-bottom: 0; }
.nav-head { display: flex; align-items: center; height: 32px; padding: 0 6px 0 5px; }
.nav-head h1 { flex: 1; font-size: 20px; line-height: 32px; color: #a4373a; white-space: nowrap; }
.nav-head button + button { margin-left: 9px; }
.nav-search { display: flex; height: 20px; margin: 0 3px 2px 2px; border: 1px solid #c3c6cb; }
.nav-search input { flex: 1; min-width: 0; padding-left: 2px; font-style: italic; }
.nav-search input::placeholder { color: #000; opacity: 1; }
.nav-search button { width: 17px; border-left: 1px solid #c3c6cb; }
.navpane h2 { display: flex; align-items: center; justify-content: space-between; height: 18px; padding: 0 12px 0 9px; font-weight: 700; font-size: 13px; color: #555; }
.navpane li { display: flex; align-items: center; gap: 11px; height: 24px; padding-left: 11px; color: #555; border: 1px solid #fff; }
.navpane .sel { background: #fcc0c2; padding-left: 5px; }

.doc { flex: 1; min-width: 0; display: flex; flex-direction: column; border-left: 1px solid #85888c; }
.doc-tabs { flex: none; display: flex; height: 24px; background: linear-gradient(#85888c, #85888c) bottom / 100% 1px no-repeat #f8f8f8; }
.doc-tab { position: relative; z-index: 1; display: flex; align-items: center; gap: 8px; margin-left: 1px; padding: 0 0 1px 5px; width: 94px; background: #fff; border-top: 1px solid #c0a58a; border-radius: 4px 0 0 0; color: #a4373a; font-weight: 700; white-space: nowrap; }
.slant { margin-left: 7px; box-shadow: -7px 0 0 #fff; }
.doc-close { margin: 0 8px 0 auto; }
.sheet-row { flex: 1; display: flex; min-height: 0; }
.sheet {
  position: relative;
  flex: 1;
  overflow: hidden;
  background:
    repeating-linear-gradient(to right, transparent 0 2px, #efeff3 2px 3px, transparent 3px 94px),
    linear-gradient(#f7f7ff, #f7f7ff) 0 0 / 100% 20px no-repeat,
    repeating-linear-gradient(to bottom, transparent 0 19px, #f3f3f5 19px 20px),
    #fff;
}
table { width: 191px; border-collapse: separate; border-spacing: 0; table-layout: fixed; background: #fff; font: 13px/18px Lato, "Open Sans", sans-serif; color: #222; }
th, td { height: 20px; padding: 0; font-weight: normal; }
.corner { width: 19px; background: #dfe3e8; border-right: 1px solid #c9ced6; }
.corner svg { margin-left: 4px; }
.f1 { padding-right: 14px; background: linear-gradient(#ffd45c, #ffea78); border-right: 1px solid #cdd3dc; text-align: center; color: #444; }
.f1 svg { float: right; margin: 8px -9px 0 2px; }
td:first-child { background: #dfe3e8; border-right: 1px solid #a9b0b8; border-bottom: 1px solid #a9b0b8; }
td:last-child { padding: 1px 0 0 3px; border-right: 1px solid #cdd5df; border-bottom: 1px solid #cdd5df; white-space: nowrap; }
tbody tr:nth-child(even) td:last-child { background: #f3f3f3; }
.cur td:first-child { background: #ffd65c; border-right-color: #ffd65c; }
.cur td:last-child { outline: 1px solid #f4a3a6; border-color: #f4a3a6; color: #000; }
.caret { display: inline-block; width: 1px; height: 17px; background: #000; vertical-align: middle; }

.callout { position: absolute; left: 190px; top: 65px; width: 492px; height: 214px; }
.callout p { position: absolute; left: 98px; right: 2px; top: 50px; text-align: center; color: #000; font: 700 16px/19px "Liberation Sans", Arial, sans-serif; white-space: nowrap; }

.vscroll { flex: none; display: flex; flex-direction: column; width: 16px; margin: 2px 0; }
.vscroll button { flex: none; height: 15px; border: 1px solid #a6a6a6; background: #fff; }
.track { flex: 1; background: #f0f0f0; }
.thumb { height: 36%; background: #fff; border: 1px solid #a6a6a6; }

.recnav { flex: none; display: flex; height: 19px; background: linear-gradient(#f3f5f8 50%, #e5e7eb 50%); border-top: 1px solid #a6a9ae; color: #555; }
.rec-main { display: flex; align-items: center; width: 188px; padding-left: 5px; border-right: 1px solid #a6a9ae; }
.rec-main button { margin-left: 8px; }
.rec-main button:nth-of-type(2) { margin: 0 5px 0 11px; }
.rec-main button:nth-of-type(3), .rec-main button:nth-of-type(4) { margin-left: 11px; }
.recnav input { height: 16px; padding-left: 2px; background: #fff; border: 1px solid #c3c6cb; color: #000; }
.rec-main input { width: 50px; }
.nofilter { width: 81px; gap: 4px; border-right: 1px solid #a6a9ae; color: #8c8c8c; }
.recnav .find { width: 70px; margin: 1px 0 0 5px; }
.corner-box { width: 17px; margin-left: auto; background: #c3c6cd; border-left: 1px solid #a6a9ae; }

/* status bar */
.status { flex: none; display: flex; align-items: center; height: 21px; padding: 0 0 2px 7px; }
.num { margin: 0 18px 0 auto; }
.status button { width: 38px; height: 21px; margin-bottom: -2px; }
.status .on { background: #c8c8c8; }

/* taskbar */
.taskbar { flex: none; display: flex; height: 40px; background: #000; color: #fff; }
.sys, .apps, .tray { display: flex; }
.sys button { width: 48px; }
.a46 button { width: 46px; }
.a45 button { width: 45px; }
.apps { position: relative; }
.a46 { margin-left: -1px; }
.run { border-bottom: 2px solid #98cc5c; padding-top: 2px; background-clip: content-box; }
.active { background: #333; background-clip: border-box; }
.split { background: linear-gradient(#2b2b2b, #2b2b2b) 0 0 / 9px 100% no-repeat; }
.tray { flex: 1; align-items: center; }
.tray span { display: flex; align-items: center; justify-content: center; width: 24px; height: 40px; }
.tray .stripe { background: linear-gradient(#2b2b2b, #2b2b2b) 0 0 / 13px 100% no-repeat; }
.tray .lang { width: 36px; }
.clock { margin-left: auto; width: 75px; text-align: center; line-height: 17px; }
.peek { width: 5px; height: 40px; border-left: 1px solid #666; }
```
